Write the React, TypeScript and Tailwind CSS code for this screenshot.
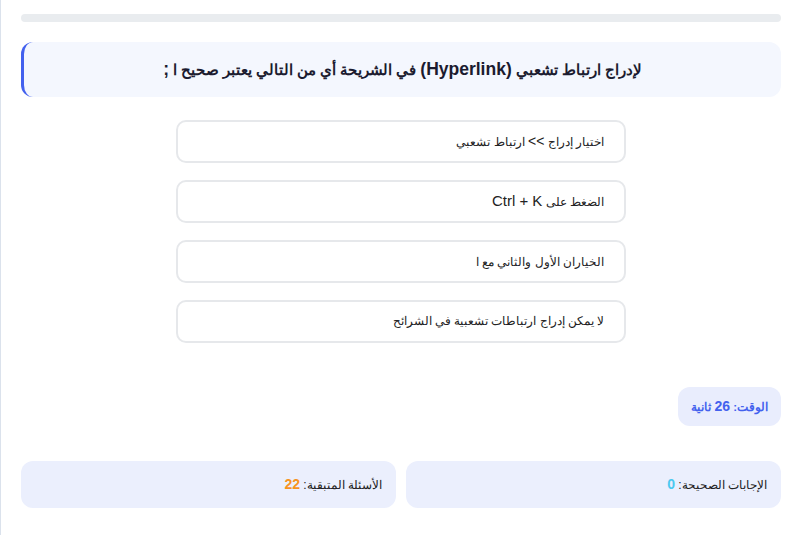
import React from "react";

function L({ children, size }: { children: React.ReactNode; size: string }) {
  return <span className={size}>{children}</span>;
}

export default function App() {
  const opt = "flex h-[43px] w-[450px] items-center rounded-[10px] border-2 border-[#e6e8eb] bg-white pr-[20px] text-[12px] text-[#222]";
  return (
    <div
      dir="rtl"
      className="min-h-[535px] w-[795px] bg-white border-l border-[#dbe2ec]"
      style={{ fontFamily: '"Liberation Sans", Arial, sans-serif' }}
    >
      <div className="flex flex-col px-[14px] pl-[20px] pt-[14px]">
        <div className="h-[8px] w-full rounded-full bg-[#e9ecef]" />

        <div className="mt-[20px] flex h-[55px] items-center justify-center rounded-[12px] border-l-[3px] border-[#4361ee] bg-[#f4f7fe]">
          <h2 className="text-[14.5px] font-bold text-[#1b1b2f]">
            لإدراج ارتباط تشعبي <L size="text-[17.5px]">(Hyperlink)</L> في الشريحة أي من التالي يعتبر صحيح ا <L size="text-[17.5px]">;</L>
          </h2>
        </div>

        <div className="mt-[23px] flex flex-col items-center gap-[17px]">
          <div className={opt}>
            <span>
              اختيار إدراج <L size="text-[14px]">&gt;&gt;</L> ارتباط تشعبي
            </span>
          </div>
          <div className={opt}>
            <span>
              الضغط على <L size="text-[15px]">Ctrl + K</L>
            </span>
          </div>
          <div className={opt}>
            <span>الخياران الأول والثاني مع ا</span>
          </div>
          <div className={opt}>
            <span className="text-[11.5px]">لا يمكن إدراج ارتباطات تشعبية في الشرائح</span>
          </div>
        </div>

        <div className="mt-[44px] flex">
          <div className="flex h-[39px] items-center rounded-[12px] bg-[#e9edfd] px-[13px] text-[11.5px] font-bold text-[#4361ee]">
            <span>
              الوقت: <L size="text-[14px]">26</L> ثانية
            </span>
          </div>
        </div>

        <div className="mt-[35px] grid grid-cols-2 gap-[10px]">
          <div className="flex h-[47px] items-center rounded-[12px] bg-[#ebeffd] pr-[14px] text-[12px] text-[#222]">
            <span>
              الإجابات الصحيحة: <span className="text-[14px] font-bold text-[#4cc9f0]">0</span>
            </span>
          </div>
          <div className="flex h-[47px] items-center rounded-[12px] bg-[#ebeffd] pr-[14px] text-[12px] text-[#222]">
            <span>
              الأسئلة المتبقية: <span className="text-[14px] font-bold text-[#f7931e]">22</span>
            </span>
          </div>
        </div>
      </div>
    </div>
  );
}
